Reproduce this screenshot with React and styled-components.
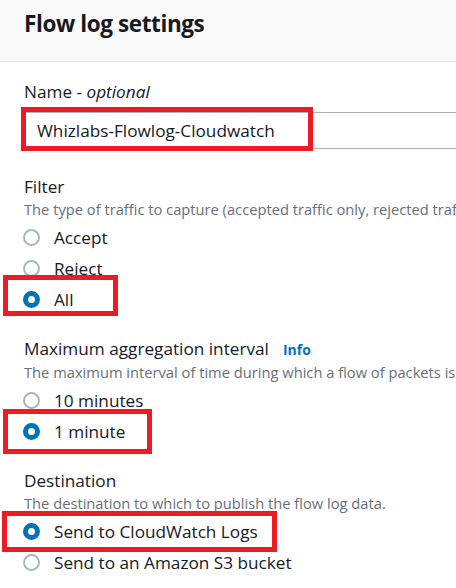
import React from 'react'
import styled, { createGlobalStyle } from 'styled-components'

const GlobalStyle = createGlobalStyle`
  html, body {
    margin: 0;
    padding: 0;
    background: #fff;
  }
  body {
    font-family: 'Open Sans', 'Noto Sans', sans-serif;
    color: #16191f;
    overflow: hidden;
  }
`

const Page = styled.div`
  width: 456px;
  overflow: hidden;
`

const Header = styled.div`
  background: #fafafa;
  border-bottom: 1px solid #eaeded;
  padding: 9.3px 24px 21.7px;
`

const Title = styled.h2`
  margin: 0;
  font-size: 22.5px;
  font-weight: 700;
  line-height: 30px;
  letter-spacing: -0.4px;
  white-space: nowrap;
`

const Form = styled.div`
  display: flex;
  flex-direction: column;
  gap: 22px;
  padding: 18.3px 0 0 24px;
`

const Field = styled.div`
  display: flex;
  flex-direction: column;
  padding-bottom: ${props => props.$extra || 0}px;
`

const Label = styled.div`
  display: flex;
  align-items: baseline;
  gap: 14px;
  font-size: 17.2px;
  line-height: 24px;
  white-space: nowrap;

  em {
    font-style: italic;
  }
`

const Info = styled.a`
  font-size: 14px;
  font-weight: 700;
  color: #0073bb;
  text-decoration: none;
`

const Description = styled.div`
  font-size: 14.7px;
  line-height: 20px;
  color: #687078;
  white-space: nowrap;
`

const InputWrap = styled.div`
  position: relative;
  margin-top: 8px;
`

const TextInput = styled.input`
  box-sizing: border-box;
  display: block;
  width: 640px;
  height: 37px;
  padding: 5px 12px 6px;
  border: 1px solid #aab7b8;
  border-radius: 0;
  background: #fff;
  color: #16191f;
  font: 17.2px/24px 'Open Sans', 'Noto Sans', sans-serif;
  outline: none;
`

const Options = styled.div`
  display: flex;
  flex-direction: column;
  margin-top: 3.3px;
`

const Option = styled.label`
  position: relative;
  display: flex;
  align-items: center;
  gap: 14.3px;
  height: 31px;
  font-size: 17.2px;
  line-height: 31px;
  white-space: nowrap;
`

const Dot = styled.span`
  box-sizing: border-box;
  flex: none;
  width: 17px;
  height: 17px;
  margin-left: -1.3px;
  border-radius: 50%;
  background: #fff;
  border: ${props => (props.$checked ? '5px solid #0073bb' : '2px solid #aab7b8')};
`

const Highlight = styled.span`
  position: absolute;
  box-sizing: border-box;
  left: ${props => props.$left}px;
  top: ${props => props.$top}px;
  width: ${props => props.$width}px;
  height: ${props => props.$height}px;
  border: 5px solid #ed1c24;
  pointer-events: none;
`

const groups = [
  {
    label: 'Filter',
    description: 'The type of traffic to capture (accepted traffic only, rejected traffic only, or all traffic).',
    options: [
      { text: 'Accept' },
      { text: 'Reject' },
      { text: 'All', checked: true, mark: { left: -20.7, top: -9, width: 114.4, height: 41 } }
    ]
  },
  {
    label: 'Maximum aggregation interval',
    info: true,
    description: 'The maximum interval of time during which a flow of packets is captured and aggregated into a flow log record.',
    options: [
      { text: '10 minutes' },
      { text: '1 minute', checked: true, mark: { left: -21, top: -7, width: 149, height: 45 } }
    ]
  },
  {
    label: 'Destination',
    description: 'The destination to which to publish the flow log data.',
    options: [
      { text: 'Send to CloudWatch Logs', checked: true, mark: { left: -22, top: -5.6, width: 275, height: 41 } },
      { text: 'Send to an Amazon S3 bucket' }
    ]
  }
]

function RadioGroup ({ group }) {
  return (
    <Field>
      <Label>
        {group.label}
        {group.info && <Info href='#'>Info</Info>}
      </Label>
      <Description>{group.description}</Description>
      <Options>
        {group.options.map(option => (
          <Option key={option.text}>
            <Dot $checked={option.checked} />
            {option.text}
            {option.mark && (
              <Highlight
                $left={option.mark.left}
                $top={option.mark.top}
                $width={option.mark.width}
                $height={option.mark.height}
              />
            )}
          </Option>
        ))}
      </Options>
    </Field>
  )
}

export default function App () {
  return (
    <Page>
      <GlobalStyle />
      <Header>
        <Title>Flow log settings</Title>
      </Header>
      <Form>
        <Field $extra={3.3}>
          <Label>
            <span>Name - <em>optional</em></span>
          </Label>
          <InputWrap>
            <TextInput defaultValue='Whizlabs-Flowlog-Cloudwatch' readOnly />
            <Highlight $left={-3} $top={-5.3} $width={292} $height={44} />
          </InputWrap>
        </Field>
        {groups.map(group => (
          <RadioGroup key={group.label} group={group} />
        ))}
      </Form>
    </Page>
  )
}
